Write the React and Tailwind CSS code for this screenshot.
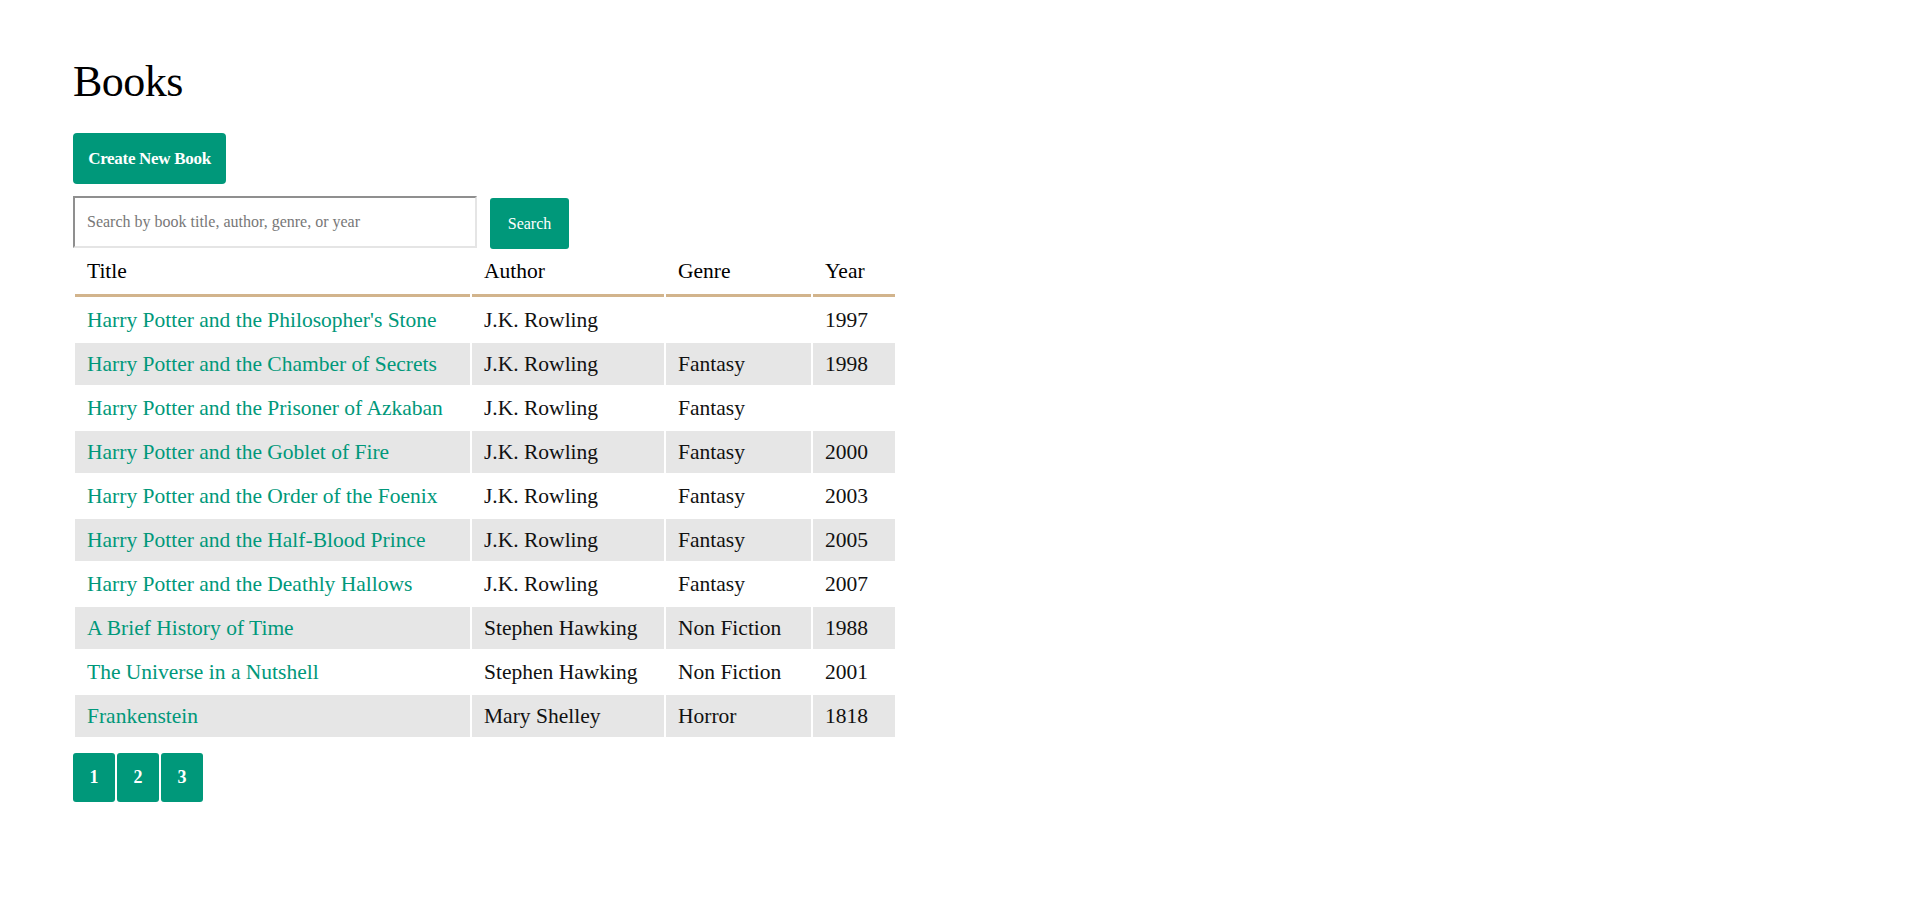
const books = [
  { title: "Harry Potter and the Philosopher's Stone", author: 'J.K. Rowling', genre: '', year: '1997' },
  { title: 'Harry Potter and the Chamber of Secrets', author: 'J.K. Rowling', genre: 'Fantasy', year: '1998' },
  { title: 'Harry Potter and the Prisoner of Azkaban', author: 'J.K. Rowling', genre: 'Fantasy', year: '' },
  { title: 'Harry Potter and the Goblet of Fire', author: 'J.K. Rowling', genre: 'Fantasy', year: '2000' },
  { title: 'Harry Potter and the Order of the Foenix', author: 'J.K. Rowling', genre: 'Fantasy', year: '2003' },
  { title: 'Harry Potter and the Half-Blood Prince', author: 'J.K. Rowling', genre: 'Fantasy', year: '2005' },
  { title: 'Harry Potter and the Deathly Hallows', author: 'J.K. Rowling', genre: 'Fantasy', year: '2007' },
  { title: 'A Brief History of Time', author: 'Stephen Hawking', genre: 'Non Fiction', year: '1988' },
  { title: 'The Universe in a Nutshell', author: 'Stephen Hawking', genre: 'Non Fiction', year: '2001' },
  { title: 'Frankenstein', author: 'Mary Shelley', genre: 'Horror', year: '1818' },
];

export default function App() {
  return (
    <div className="min-h-screen bg-white px-[73px] pt-[56px] font-['Liberation_Serif',serif] text-[#111]">
      <h1 className="text-[44px] leading-[51px] text-black tracking-[-0.5px]">Books</h1>

      <button className="mt-[26px] w-[153px] h-[51px] rounded bg-[#00987a] text-white text-[17px] font-bold tracking-[-0.3px]">
        Create New Book
      </button>

      <form className="mt-[12px] flex items-start gap-[13px]" onSubmit={(e) => e.preventDefault()}>
        <input
          type="text"
          placeholder="Search by book title, author, genre, or year"
          className="w-[404px] h-[52px] border-2 border-t-[#8f8f8f] border-l-[#8f8f8f] border-b-[#e5e5e5] border-r-[#e5e5e5] pl-3 text-[16px] outline-none placeholder:text-[#777]"
        />
        <button className="mt-[2px] w-[79px] h-[51px] rounded-[3px] bg-[#00987a] text-white text-[16px]">
          Search
        </button>
      </form>

      <table className="mt-[1px] w-[824px] table-fixed border-separate border-spacing-[2px] text-[21.5px]">
        <thead>
          <tr>
            <th className="w-[395px] border-b-[3px] border-[#d2b48c] px-3 pt-[7px] pb-[11px] text-left font-normal leading-[24px] text-black">Title</th>
            <th className="w-[192px] border-b-[3px] border-[#d2b48c] px-3 pt-[7px] pb-[11px] text-left font-normal leading-[24px] text-black">Author</th>
            <th className="w-[145px] border-b-[3px] border-[#d2b48c] px-3 pt-[7px] pb-[11px] text-left font-normal leading-[24px] text-black">Genre</th>
            <th className="border-b-[3px] border-[#d2b48c] px-3 pt-[7px] pb-[11px] text-left font-normal leading-[24px] text-black">Year</th>
          </tr>
        </thead>
        <tbody>
          {books.map((b, i) => (
            <tr key={b.title} className={i % 2 === 1 ? 'bg-[#e6e6e6]' : ''}>
              <td className="h-[42px] px-3 leading-[24px] whitespace-nowrap">
                <a href="#" className="text-[#00987a]">{b.title}</a>
              </td>
              <td className="h-[42px] px-3 leading-[24px] whitespace-nowrap">{b.author}</td>
              <td className="h-[42px] px-3 leading-[24px] whitespace-nowrap">{b.genre}</td>
              <td className="h-[42px] px-3 leading-[24px] whitespace-nowrap">{b.year}</td>
            </tr>
          ))}
        </tbody>
      </table>

      <div className="mt-[14px] flex gap-[2px]">
        {['1', '2', '3'].map((p) => (
          <button key={p} className="w-[42px] h-[49px] rounded-[3px] bg-[#00987a] text-white text-[18px] font-bold">
            {p}
          </button>
        ))}
      </div>
    </div>
  );
}
